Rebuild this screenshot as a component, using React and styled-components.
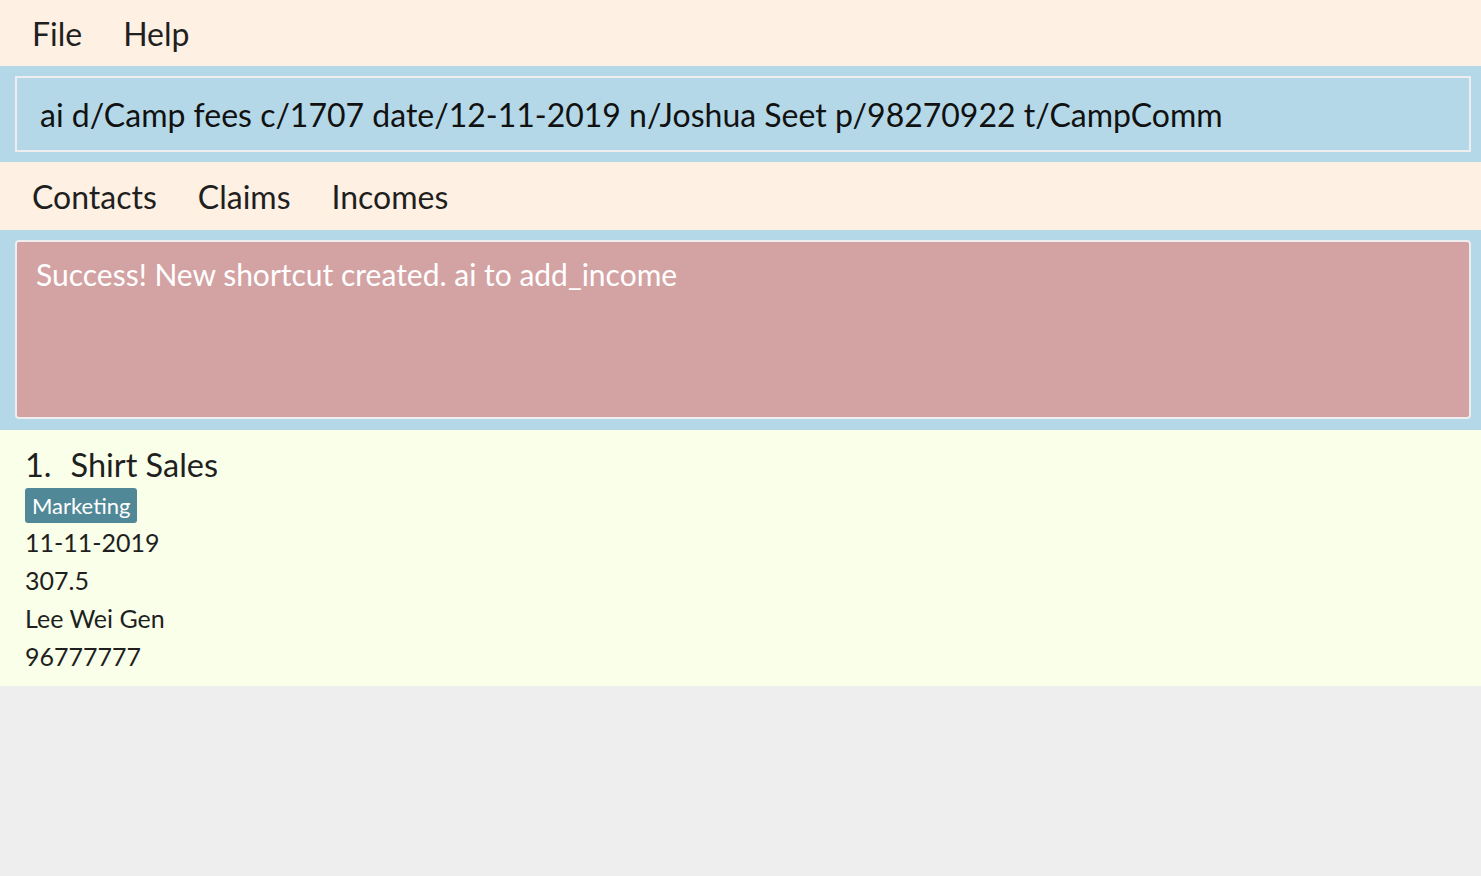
import React from "react";
import styled, { createGlobalStyle } from "styled-components";

const GlobalStyle = createGlobalStyle`
  html, body {
    margin: 0;
    padding: 0;
    background: #eeeeee;
    font-family: Lato, "Open Sans", "Liberation Sans", sans-serif;
    color: #1f1f1f;
  }
`;

const Page = styled.div`
  display: flex;
  flex-direction: column;
  min-height: 876px;
  background: #eeeeee;
`;

const MenuBar = styled.div`
  height: 66px;
  display: flex;
  align-items: center;
  gap: 41px;
  padding: 0 0 0 32px;
  background: #fef0e2;
  font-size: 32px;
`;

const BluePanel = styled.div`
  background: #b4d8e7;
  padding: 10px 10px ${(p) => p.$bottom || 10}px 15px;
`;

const CommandBox = styled.div`
  height: 72px;
  border: 2px solid #eeeeee;
  display: flex;
  align-items: center;
  padding-left: 23px;
  font-size: 32px;
  color: #111;
  white-space: nowrap;
`;

const ResultBox = styled.div`
  height: 179px;
  box-sizing: border-box;
  border: 2px solid #eeeeee;
  border-radius: 4px;
  background: #d3a3a4;
  padding: 14px 19px;
  color: #ffffff;
  font-size: 30px;
`;

const TabBar = styled(MenuBar)`
  height: 68px;
`;

const ListPanel = styled.div`
  background: #f9ffe9;
  padding: 14px 0 11px 25px;
`;

const Title = styled.div`
  font-size: 32.5px;
  line-height: 42px;
  display: flex;
  gap: 19px;
`;

const Tag = styled.span`
  display: inline-block;
  background: #518898;
  color: #ffffff;
  font-size: 22px;
  line-height: 35px;
  padding: 0 7px;
  border-radius: 3px;
  margin-top: 2px;
`;

const Line = styled.div`
  font-size: 25px;
  line-height: 38px;
`;

const income = {
  index: 1,
  description: "Shirt Sales",
  tags: ["Marketing"],
  date: "11-11-2019",
  cash: "307.5",
  name: "Lee Wei Gen",
  phone: "96777777",
};

export default function App() {
  return (
    <Page>
      <GlobalStyle />
      <MenuBar>
        <span>File</span>
        <span>Help</span>
      </MenuBar>
      <BluePanel>
        <CommandBox>
          ai d/Camp fees c/1707 date/12-11-2019 n/Joshua Seet p/98270922 t/CampComm
        </CommandBox>
      </BluePanel>
      <TabBar>
        <span>Contacts</span>
        <span>Claims</span>
        <span>Incomes</span>
      </TabBar>
      <BluePanel $bottom={11}>
        <ResultBox>Success! New shortcut created. ai to add_income</ResultBox>
      </BluePanel>
      <ListPanel>
        <Title>
          <span>{income.index}.</span>
          <span>{income.description}</span>
        </Title>
        <div>
          {income.tags.map((t) => (
            <Tag key={t}>{t}</Tag>
          ))}
        </div>
        <Line>{income.date}</Line>
        <Line>{income.cash}</Line>
        <Line>{income.name}</Line>
        <Line>{income.phone}</Line>
      </ListPanel>
    </Page>
  );
}
